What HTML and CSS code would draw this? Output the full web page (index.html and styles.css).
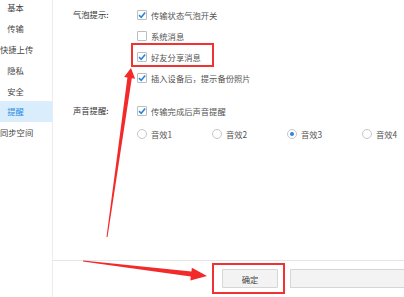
FILE: index.html
```html
<!DOCTYPE html>
<html>
<head>
<meta charset="utf-8">
<link rel="stylesheet" href="styles.css">
</head>
<body>
<div class="app">
  <aside class="sidebar">
    <div class="nav-list">
      <div class="nav-item"><span>基本</span></div>
      <div class="nav-item"><span>传输</span></div>
      <div class="nav-item"><span>快捷上传</span></div>
      <div class="nav-item"><span>隐私</span></div>
      <div class="nav-item"><span>安全</span></div>
      <div class="nav-item active"><span>提醒</span></div>
      <div class="nav-item"><span>同步空间</span></div>
    </div>
  </aside>
  <main class="main">
    <div class="content">
      <section class="group">
        <div class="group-label">气泡提示:</div>
        <div class="group-options">
          <div class="row"><span class="cb checked"><svg viewBox="0 0 10 10"><path d="M2 5.2 L4.2 7.3 L8.2 2.6" /></svg></span>传输状态气泡开关</div>
          <div class="row"><span class="cb"></span>系统消息</div>
          <div class="row"><span class="cb checked"><svg viewBox="0 0 10 10"><path d="M2 5.2 L4.2 7.3 L8.2 2.6" /></svg></span>好友分享消息</div>
          <div class="row"><span class="cb checked"><svg viewBox="0 0 10 10"><path d="M2 5.2 L4.2 7.3 L8.2 2.6" /></svg></span>插入设备后，提示备份照片</div>
        </div>
      </section>
      <section class="group sound">
        <div class="group-label">声音提醒:</div>
        <div class="group-options">
          <div class="row"><span class="cb checked"><svg viewBox="0 0 10 10"><path d="M2 5.2 L4.2 7.3 L8.2 2.6" /></svg></span>传输完成后声音提醒</div>
          <div class="row radios">
            <div class="radio-item"><span class="rd"></span>音效1</div>
            <div class="radio-item"><span class="rd"></span>音效2</div>
            <div class="radio-item"><span class="rd on"></span>音效3</div>
            <div class="radio-item last"><span class="rd"></span>音效4</div>
          </div>
        </div>
      </section>
    </div>
    <footer class="footer">
      <button class="btn ok">确定</button>
      <button class="btn other"></button>
    </footer>
  </main>
</div>
<div class="mark box1"></div>
<div class="mark box2"></div>
<svg class="arrows" width="404" height="297" viewBox="0 0 404 297">
  <polygon points="106.5,236.9 127.4,77.6 124.15,77.1 131,68 135.05,78.7 131.8,78.2 107.5,237.1" />
  <polygon points="83.05,260.6 191.4,271.6 191.88,267.65 207,276 190.34,280.55 190.8,276.6 82.95,261.4" />
</svg>
</body>
</html>
```
FILE: styles.css
```css
html, body {
  margin: 0;
  padding: 0;
  background: #fff;
}
body {
  width: 404px;
  height: 297px;
  overflow: hidden;
  position: relative;
  font-family: "Noto Sans CJK SC", "Noto Sans", sans-serif;
  font-size: 8.3px;
  color: #555;
}
.app {
  display: flex;
  height: 297px;
}
.sidebar {
  width: 52px;
  border-right: 1px solid #ececec;
  flex: none;
}
.nav-list {
  margin-top: -3px;
}
.nav-item {
  height: 20.8px;
  display: flex;
  align-items: center;
  color: #444;
}
.nav-item span {
  width: 31px;
  text-align: center;
  white-space: nowrap;
}
.nav-item.active {
  background: #d9edfc;
  color: #2b8ee0;
}
.main {
  flex: 1;
  display: flex;
  flex-direction: column;
  min-width: 0;
  overflow: hidden;
}
.content {
  height: 260px;
  padding: 4px 0 0 20px;
  box-sizing: border-box;
}
.group {
  display: grid;
  grid-template-columns: 64px 1fr;
}
.group.sound {
  margin-top: 12px;
}
.group-label {
  height: 21px;
  line-height: 21px;
  color: #333;
  white-space: nowrap;
}
.row {
  height: 21px;
  display: flex;
  align-items: center;
  white-space: nowrap;
}
.row.radios {
  height: 23px;
  margin-top: 1px;
}
.cb {
  width: 8px;
  height: 8px;
  border: 1px solid #bdbdbd;
  border-radius: 1px;
  background: #fff;
  margin-right: 4px;
  flex: none;
  position: relative;
}
.cb svg {
  position: absolute;
  left: -1px;
  top: -1px;
  width: 10px;
  height: 10px;
}
.cb path {
  fill: none;
  stroke: #2a86dc;
  stroke-width: 1.6;
}
.radio-item {
  width: 75px;
  display: flex;
  align-items: center;
  flex: none;
}
.radio-item.last {
  width: auto;
}
.rd {
  width: 8px;
  height: 8px;
  border: 1px solid #c6c6c6;
  border-radius: 50%;
  margin-right: 4px;
  position: relative;
  flex: none;
}
.rd.on::after {
  content: "";
  position: absolute;
  left: 2px;
  top: 2px;
  width: 4px;
  height: 4px;
  border-radius: 50%;
  background: #2a86dc;
}
.footer {
  border-top: 1px solid #e6e6e6;
  flex: 1;
  display: flex;
  align-items: flex-start;
  padding: 8px 0 0 169px;
  gap: 12px;
}
.btn {
  height: 19px;
  border: 1px solid #d6d6d6;
  background: #f3f3f3;
  border-radius: 1px;
  font-family: inherit;
  font-size: 8.3px;
  color: #444;
  padding: 0;
  flex: none;
}
.btn.ok {
  width: 56px;
}
.btn.other {
  width: 114px;
  border-right: none;
  border-radius: 1px 0 0 1px;
}
.mark {
  position: absolute;
  border: 2px solid #f03232;
  box-sizing: border-box;
}
.box1 {
  left: 131px;
  top: 43px;
  width: 83px;
  height: 24px;
}
.box2 {
  left: 212px;
  top: 263px;
  width: 73px;
  height: 31px;
}
.arrows {
  position: absolute;
  left: 0;
  top: 0;
}
.arrows polygon {
  fill: #f22a2a;
}
```
